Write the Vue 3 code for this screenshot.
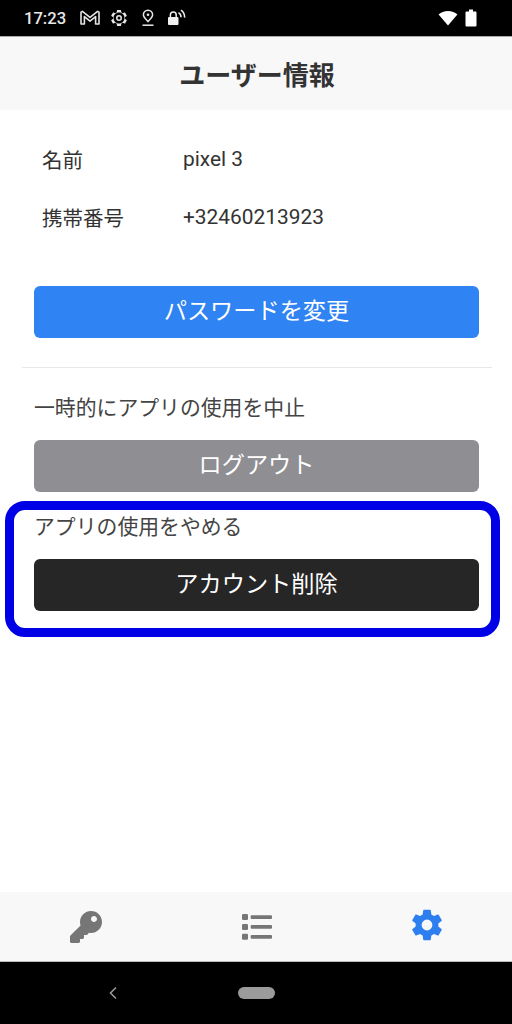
<template>
  <div class="screen">
    <!-- status bar -->
    <div class="status-bar">
      <span class="clock">17:23</span>
      <svg class="st-mail" width="22" height="18" viewBox="0 0 22 18" fill="none" stroke="#e4e4e4" stroke-width="1.6" stroke-linejoin="round">
        <path d="M2 15V3.2L3.4 2.4 11 8.4l7.6-6 1.4.8V15h-3.4V7.6L11 12.2 5.4 7.6V15z" />
      </svg>
      <svg class="st-gear" width="20" height="20" viewBox="0 0 24 24" fill="#e8e8e8" fill-rule="evenodd">
        <path d="M19.14 12.94c.04-.3.06-.61.06-.94 0-.32-.02-.64-.07-.94l2.03-1.58a.49.49 0 0 0 .12-.61l-1.92-3.32a.488.488 0 0 0-.59-.22l-2.39.96c-.5-.38-1.03-.7-1.62-.94l-.36-2.54a.484.484 0 0 0-.48-.41h-3.84c-.24 0-.43.17-.47.41l-.36 2.54c-.59.24-1.13.57-1.62.94l-2.39-.96c-.22-.08-.47 0-.59.22L2.74 8.87c-.12.21-.08.47.12.61l2.03 1.58c-.05.3-.09.63-.09.94s.02.64.07.94l-2.03 1.58a.49.49 0 0 0-.12.61l1.92 3.32c.12.22.37.29.59.22l2.39-.96c.5.38 1.03.7 1.62.94l.36 2.54c.05.24.24.41.48.41h3.84c.24 0 .44-.17.47-.41l.36-2.54c.59-.24 1.13-.56 1.62-.94l2.39.96c.22.08.47 0 .59-.22l1.92-3.32c.12-.22.07-.47-.12-.61l-2.01-1.58zM5.4 12c0 3.64 2.96 6.6 6.6 6.6s6.6-2.96 6.6-6.6-2.96-6.6-6.6-6.6-6.6 2.96-6.6 6.6zM12 15.6a3.6 3.6 0 1 1 0-7.2 3.6 3.6 0 0 1 0 7.2zM12 13.8a1.8 1.8 0 1 0 0-3.6 1.8 1.8 0 0 0 0 3.6z" />
      </svg>
      <svg class="st-pin" width="16" height="18" viewBox="0 0 16 18" fill="none" stroke="#e8e8e8" stroke-width="1.5">
        <path d="M8 12.6C5.6 10 3.4 8.2 3.4 5.8a4.6 4.6 0 0 1 9.2 0c0 2.4-2.2 4.2-4.6 6.8z" />
        <circle cx="8" cy="5.8" r="1.3" fill="#e8e8e8" stroke="none" />
        <path d="M2.5 16.2h11" />
      </svg>
      <svg class="st-lock" width="20" height="18" viewBox="0 0 20 18" fill="none" stroke="#f0f0f0" stroke-width="1.5">
        <rect x="1" y="8" width="10.5" height="8" rx="1" fill="#f0f0f0" stroke="none" />
        <path d="M3.4 8V6a2.9 2.9 0 0 1 5.8 0v2" />
        <path d="M11.5 3.6a5 5 0 0 1 2.5 4.6M14 1.2a8.6 8.6 0 0 1 3.6 7.4" />
      </svg>
      <span class="st-gap"></span>
      <svg width="20" height="16" viewBox="0 0 20 16" fill="#fff" class="st-wifi">
        <path d="M10 15.5 0.6 4.6C3 2.4 6.3 1 10 1s7 1.4 9.4 3.6z" />
      </svg>
      <svg width="12" height="18" viewBox="0 0 12 18" fill="#fff">
        <path d="M4 0.5h4v2h2.6c.5 0 .9.4.9.9v13.2c0 .5-.4.9-.9.9H1.4c-.5 0-.9-.4-.9-.9V3.4c0-.5.4-.9.9-.9H4z" />
      </svg>
    </div>

    <header class="app-header">ユーザー情報</header>

    <main class="content">
      <div class="info">
        <div v-for="row in rows" :key="row.label" class="info-row">
          <span class="info-label">{{ row.label }}</span>
          <span class="info-value">{{ row.value }}</span>
        </div>
      </div>

      <div class="pad">
        <button class="btn btn-blue">パスワードを変更</button>
      </div>

      <hr class="divider" />

      <div class="pad">
        <p class="note note-first">一時的にアプリの使用を中止</p>
        <button class="btn btn-gray">ログアウト</button>
      </div>

      <!-- 枠で強調された部分 -->
      <section class="highlight">
        <p class="note">アプリの使用をやめる</p>
        <button class="btn btn-dark">アカウント削除</button>
      </section>
    </main>

    <nav class="tab-bar">
      <div class="tab">
        <svg width="32" height="32" viewBox="0 0 512 512" fill="#767676">
          <path d="M512 176.001C512 273.203 433.202 352 336 352c-11.22 0-22.19-1.062-32.827-3.069l-24.012 27.014A23.999 23.999 0 0 1 261.223 384H224v40c0 13.255-10.745 24-24 24h-40v40c0 13.255-10.745 24-24 24H24c-13.255 0-24-10.745-24-24v-78.059c0-6.365 2.529-12.47 7.029-16.971l161.802-161.802C163.108 213.814 160 195.271 160 176 160 78.798 238.797.001 335.999 0 433.488-.001 512 78.511 512 176.001zM336 128c0 26.51 21.49 48 48 48s48-21.49 48-48-21.49-48-48-48-48 21.49-48 48z" />
        </svg>
      </div>
      <div class="tab">
        <svg width="30" height="26" viewBox="0 0 30 26" fill="#767676">
          <rect x="0" y="0" width="6" height="6" rx="1.2" />
          <rect x="0" y="10" width="6" height="6" rx="1.2" />
          <rect x="0" y="19.8" width="6" height="6" rx="1.2" />
          <rect x="8.7" y="1.2" width="21.3" height="3.7" rx="1" />
          <rect x="8.7" y="11" width="21.3" height="3.7" rx="1" />
          <rect x="8.7" y="21" width="21.3" height="3.7" rx="1" />
        </svg>
      </div>
      <div class="tab">
        <svg class="tab-gear" width="38" height="38" viewBox="0 0 24 24" fill="#2d7ff0">
          <path d="M19.14 12.94c.04-.3.06-.61.06-.94 0-.32-.02-.64-.07-.94l2.03-1.58a.49.49 0 0 0 .12-.61l-1.92-3.32a.488.488 0 0 0-.59-.22l-2.39.96c-.5-.38-1.03-.7-1.62-.94l-.36-2.54a.484.484 0 0 0-.48-.41h-3.84c-.24 0-.43.17-.47.41l-.36 2.54c-.59.24-1.13.57-1.62.94l-2.39-.96c-.22-.08-.47 0-.59.22L2.74 8.87c-.12.21-.08.47.12.61l2.03 1.58c-.05.3-.09.63-.09.94s.02.64.07.94l-2.03 1.58a.49.49 0 0 0-.12.61l1.92 3.32c.12.22.37.29.59.22l2.39-.96c.5.38 1.03.7 1.62.94l.36 2.54c.05.24.24.41.48.41h3.84c.24 0 .44-.17.47-.41l.36-2.54c.59-.24 1.13-.56 1.62-.94l2.39.96c.22.08.47 0 .59-.22l1.92-3.32c.12-.22.07-.47-.12-.61l-2.01-1.58zM12 15.4a3.4 3.4 0 1 1 0-6.8 3.4 3.4 0 0 1 0 6.8z" />
        </svg>
      </div>
    </nav>

    <div class="sys-nav">
      <svg class="back" width="12" height="16" viewBox="0 0 12 16" fill="none" stroke="#9a9a9a" stroke-width="1.6">
        <path d="M9 2.5 3.5 8 9 13.5" />
      </svg>
      <span class="home-pill"></span>
    </div>
  </div>
</template>

<script setup>
const rows = [
  { label: "名前", value: "pixel 3" },
  { label: "携帯番号", value: "+32460213923" }
];
</script>

<style>
html,
body {
  margin: 0;
  background: #fff;
}
</style>

<style scoped>
.screen {
  width: 512px;
  height: 1024px;
  display: flex;
  flex-direction: column;
  overflow: hidden;
  font-family: Roboto, "Noto Sans CJK JP", sans-serif;
  color: #333;
  background: #fff;
}

/* status bar */
.status-bar {
  height: 36px;
  flex: none;
  background: #000;
  border-bottom: 1px solid #aaa;
  display: flex;
  align-items: center;
  padding: 0 35px 0 24px;
  color: #e8e8e8;
}

.clock {
  font-size: 16.6px;
  font-weight: 500;
  width: 55px;
}

.st-mail {
  margin-right: 8px;
}

.st-gear {
  margin-right: 11px;
}

.st-pin {
  margin-right: 11px;
}

.st-gap {
  flex: 1;
}

.st-wifi {
  margin-right: 7px;
}

/* header */
.app-header {
  height: 73px;
  flex: none;
  box-sizing: border-box;
  padding-left: 2px;
  background: #f8f8f8;
  display: flex;
  align-items: center;
  justify-content: center;
  font-size: 26px;
  font-weight: 700;
  color: #333;
}

.content {
  flex: 1;
}

.info {
  padding: 20px 0 0 42px;
}

.info-row {
  height: 58px;
  display: flex;
  align-items: center;
}

.info-label {
  width: 141px;
  font-size: 20.5px;
}

.info-value {
  font-size: 20.9px;
}

.pad {
  padding: 0 33px 0 34px;
}

.pad .btn-blue {
  margin-top: 40px;
}

.btn {
  display: block;
  width: 100%;
  height: 52px;
  border: none;
  border-radius: 6px;
  color: #fff;
  font-family: inherit;
  font-size: 23.2px;
  padding: 0 0 7px;
}

.btn-blue {
  background: #3083f2;
}

.btn-gray {
  background: #8e8e93;
}

.btn-dark {
  background: #262626;
}

.divider {
  height: 1px;
  border: none;
  background: #e8e8e8;
  margin: 29px 20px 0 22px;
}

.note {
  margin: 0;
  font-size: 20.85px;
  line-height: 30px;
  color: #444;
}

.note-first {
  padding: 25px 0 17px;
}

.highlight {
  width: 495px;
  height: 136px;
  box-sizing: border-box;
  margin: 9px 0 0 5px;
  border: 9px solid #0000e6;
  border-radius: 20px;
  padding: 2px 12px 0 20px;
}

.highlight .note {
  margin-bottom: 17px;
}

/* tab bar */
.tab-bar {
  height: 69px;
  flex: none;
  background: #f8f8f8;
  border-bottom: 1px solid #bbb;
  display: flex;
  align-items: center;
}

.tab {
  flex: 1;
  padding-left: 2px;
  display: flex;
  justify-content: center;
  align-items: center;
}

.tab-gear {
  margin: 0 2px 3px 0;
}

/* system nav */
.sys-nav {
  height: 62px;
  flex: none;
  background: #000;
  position: relative;
}

.back {
  position: absolute;
  left: 107px;
  top: 23px;
}

.home-pill {
  position: absolute;
  left: 238px;
  top: 25px;
  width: 37px;
  height: 12px;
  border-radius: 6px;
  background: #9b9b9b;
}
</style>
